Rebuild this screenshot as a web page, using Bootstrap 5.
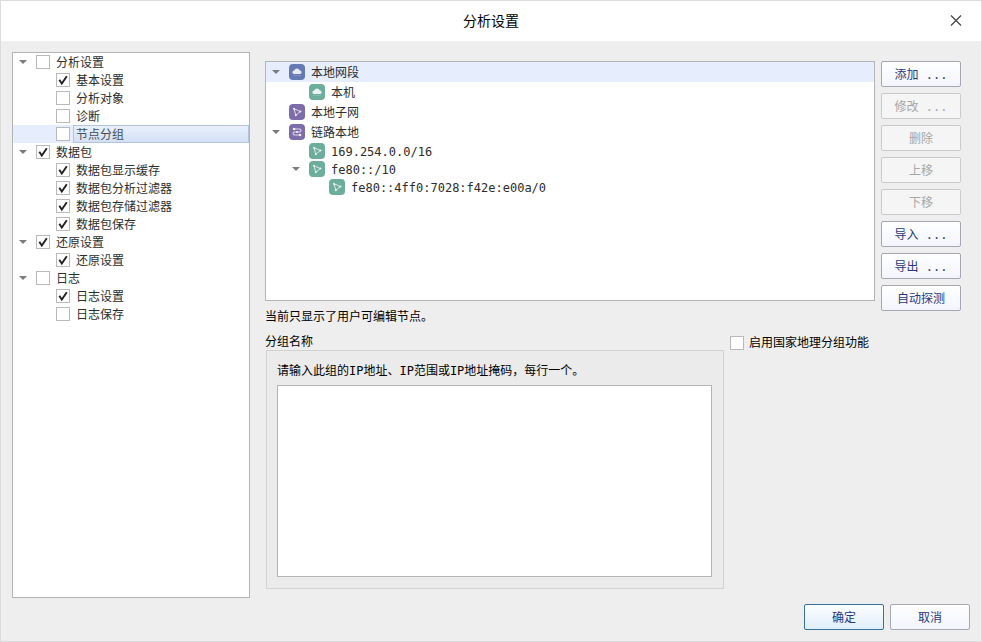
<!DOCTYPE html>
<html lang="zh-CN">
<head>
<meta charset="utf-8">
<meta name="viewport" content="width=device-width, initial-scale=1">
<title>分析设置</title>
<link href="https://cdn.jsdelivr.net/npm/bootstrap@5.3.0/dist/css/bootstrap.min.css" rel="stylesheet">
<style>
body { font: 12px/18px "DejaVu Sans Mono", "Noto Sans CJK SC", monospace; color: #000; background: #eee; }
.dialog { border: 1px solid #dcdcdc; }
.title-bar { height: 40px; background: #fff; }
.title-bar h1 { font-size: 14px; line-height: 20px; }
.close-btn { width: 50px; height: 40px; }
.dialog-main { padding: 11px 20px 0 11px; gap: 15px; }
.dialog-foot { padding: 6px 11px 11px; gap: 6px; }
.pane { background: #fff; border: 1px solid #b4b4b4; }
.settings-tree { width: 238px; flex: none; margin-bottom: 0; }
.tree { color: #2c2c2c; }
.tree ul ul { padding-left: 20px; }
.tree-row { display: flex; align-items: center; height: 18px; }
.tree-row.tall { height: 20px; }
.tree ul ul .tree-row { margin-left: -20px; padding-left: 20px; }
.tree ul ul ul .tree-row { margin-left: -40px; padding-left: 40px; }
.tree-row.selected { background: #e6eefd; }
.toggle { width: 20px; height: 18px; flex: none; margin-right: 3px; padding: 0; border: 0; background: none; display: flex; align-items: center; justify-content: center; }
button.toggle::before { content: ""; border: 4px solid transparent; border-top-color: #7b7b7b; border-bottom: 0; }
.tick { appearance: none; flex: none; width: 14px; height: 14px; margin: 0; border: 1px solid #b9b9b9; background: #fff; }
.tick:checked { background: #fff url("data:image/svg+xml,%3Csvg xmlns='http://www.w3.org/2000/svg' viewBox='0 0 12 12'%3E%3Cpath d='M2.300 5.800 4.800 9.600 9.800 2.200' fill='none' stroke='%23222' stroke-width='1.9'/%3E%3C/svg%3E"); }
.row-text { margin-left: 3px; padding: 2px 0 0 2px; border: 1px solid transparent; line-height: 14px; flex: 1; white-space: nowrap; }
.selected .row-text.boxed { border-color: #b3c3dd; background: linear-gradient(#e9f0fc, #d3e0f4); color: #454d5c; }
.node-icon { width: 16px; height: 16px; flex: none; }
.right-side { padding-top: 9px; min-width: 0; }
.node-list { height: 240px; }
.side-buttons { width: 80px; flex: none; }
.gap-6 { gap: 6px; }
.gap-7 { gap: 7px; }
.dlg-btn { --bs-btn-font-size: 12px; --bs-btn-line-height: 18px; --bs-btn-border-radius: 2px; --bs-btn-color: #26387c; --bs-btn-border-color: #a5a8b0; --bs-btn-disabled-color: #a6a6a6; --bs-btn-disabled-border-color: #cbcbcb; --bs-btn-disabled-opacity: 1; padding: 4px 0 2px; font-family: inherit; width: 80px; background: linear-gradient(#fff, #f2f5fd); white-space: pre; }
.dlg-btn:disabled { background: #f5f5f5; }
.dlg-btn.default { --bs-btn-border-color: #36709c; background: linear-gradient(#fdfeff, #dfeefa); }
.group-area { padding-bottom: 9px; }
.group-name { padding-top: 2px; line-height: 16px; }
.geo-side { width: 231px; flex: none; padding-top: 2px; }
.geo-side label { margin-left: 5px; }
.group-box { border: 1px solid #d2d2d2; background: #ebebeb; padding: 11px 11px 11px 10px; margin-left: 1px; }
.group-box textarea { resize: none; border-radius: 0; outline: 0; margin-top: 5px; }
</style>
<script src="https://cdn.jsdelivr.net/npm/bootstrap@5.3.0/dist/js/bootstrap.bundle.min.js"></script>
</head>
<body>
<svg class="d-none" aria-hidden="true">
  <symbol id="cloud" viewBox="0 0 16 16"><path d="M5 10a1.700 1.700 0 0 1 .2-3.400A2.900 2.900 0 0 1 10.700 6.600 1.700 1.700 0 0 1 11 10Z" fill="#fff" opacity=".85"/><path d="M4 11.500h8" stroke="#fff" stroke-width="1" opacity=".15"/></symbol>
  <symbol id="subnet" viewBox="0 0 16 16"><path d="M5 4.800 11.500 7.500 6.800 11.200Z" fill="none" stroke="#fff" stroke-width="1" opacity=".75"/><g fill="#fff" opacity=".8"><circle cx="5" cy="4.800" r="1"/><circle cx="11.500" cy="7.500" r="1"/><circle cx="6.800" cy="11.200" r="1"/></g></symbol>
  <symbol id="link" viewBox="0 0 16 16"><path d="M4.500 5H10.500Q12 5 12 6.500T10.500 8H5.500Q4 8 4 9.500T5.500 11H11.500" fill="none" stroke="#fff" stroke-width="1.100" opacity=".75"/><g fill="#fff" opacity=".85"><circle cx="5" cy="5" r="1.300"/><circle cx="11" cy="11" r="1.300"/><circle cx="8" cy="8" r="1"/></g></symbol>
</svg>
<div class="dialog min-vh-100 d-flex flex-column">
  <header class="title-bar d-flex align-items-center position-relative justify-content-center">
    <h1 class="m-0 fw-normal">分析设置</h1>
    <button type="button" class="close-btn btn p-0 border-0 position-absolute top-0 end-0 d-flex align-items-center justify-content-center" aria-label="关闭">
      <svg width="12" height="12" viewBox="0 0 12 12"><path d="M1 0.500 11 10.500M11 0.500 1 10.500" stroke="#444" stroke-width="1.200"/></svg>
    </button>
  </header>

  <main class="dialog-main d-flex flex-grow-1">
    <nav class="settings-tree pane tree" aria-label="设置分类">
      <ul class="list-unstyled m-0">
        <li><div class="tree-row"><button type="button" class="toggle" aria-label="折叠"></button><input class="tick" type="checkbox" id="c1"><label class="row-text" for="c1">分析设置</label></div>
          <ul class="list-unstyled">
            <li class="tree-row"><span class="toggle"></span><input class="tick" type="checkbox" id="c2" checked><label class="row-text" for="c2">基本设置</label></li>
            <li class="tree-row"><span class="toggle"></span><input class="tick" type="checkbox" id="c3"><label class="row-text" for="c3">分析对象</label></li>
            <li class="tree-row"><span class="toggle"></span><input class="tick" type="checkbox" id="c4"><label class="row-text" for="c4">诊断</label></li>
            <li class="tree-row selected"><span class="toggle"></span><input class="tick" type="checkbox" id="c5"><label class="row-text boxed" for="c5">节点分组</label></li>
          </ul>
        </li>
        <li><div class="tree-row"><button type="button" class="toggle" aria-label="折叠"></button><input class="tick" type="checkbox" id="c6" checked><label class="row-text" for="c6">数据包</label></div>
          <ul class="list-unstyled">
            <li class="tree-row"><span class="toggle"></span><input class="tick" type="checkbox" id="c7" checked><label class="row-text" for="c7">数据包显示缓存</label></li>
            <li class="tree-row"><span class="toggle"></span><input class="tick" type="checkbox" id="c8" checked><label class="row-text" for="c8">数据包分析过滤器</label></li>
            <li class="tree-row"><span class="toggle"></span><input class="tick" type="checkbox" id="c9" checked><label class="row-text" for="c9">数据包存储过滤器</label></li>
            <li class="tree-row"><span class="toggle"></span><input class="tick" type="checkbox" id="c10" checked><label class="row-text" for="c10">数据包保存</label></li>
          </ul>
        </li>
        <li><div class="tree-row"><button type="button" class="toggle" aria-label="折叠"></button><input class="tick" type="checkbox" id="c11" checked><label class="row-text" for="c11">还原设置</label></div>
          <ul class="list-unstyled">
            <li class="tree-row"><span class="toggle"></span><input class="tick" type="checkbox" id="c12" checked><label class="row-text" for="c12">还原设置</label></li>
          </ul>
        </li>
        <li><div class="tree-row"><button type="button" class="toggle" aria-label="折叠"></button><input class="tick" type="checkbox" id="c13"><label class="row-text" for="c13">日志</label></div>
          <ul class="list-unstyled">
            <li class="tree-row"><span class="toggle"></span><input class="tick" type="checkbox" id="c14" checked><label class="row-text" for="c14">日志设置</label></li>
            <li class="tree-row"><span class="toggle"></span><input class="tick" type="checkbox" id="c15"><label class="row-text" for="c15">日志保存</label></li>
          </ul>
        </li>
      </ul>
    </nav>

    <section class="right-side flex-grow-1 d-flex flex-column gap-6">
      <div class="d-flex gap-6">
        <div class="flex-grow-1 d-flex flex-column gap-7">
          <div class="node-list pane tree">
            <ul class="list-unstyled m-0">
              <li><div class="tree-row tall selected"><button type="button" class="toggle" aria-label="折叠"></button><svg class="node-icon"><rect width="16" height="16" rx="4" fill="#6679b3"/><use href="#cloud"/></svg><span class="row-text">本地网段</span></div>
                <ul class="list-unstyled">
                  <li class="tree-row tall"><span class="toggle"></span><svg class="node-icon"><rect width="16" height="16" rx="4" fill="#6dad9b"/><use href="#cloud"/></svg><span class="row-text">本机</span></li>
                </ul>
              </li>
              <li class="tree-row tall"><span class="toggle"></span><svg class="node-icon"><rect width="16" height="16" rx="4" fill="#7e6baa"/><use href="#subnet"/></svg><span class="row-text">本地子网</span></li>
              <li><div class="tree-row tall"><button type="button" class="toggle" aria-label="折叠"></button><svg class="node-icon"><rect width="16" height="16" rx="4" fill="#7e6baa"/><use href="#link"/></svg><span class="row-text">链路本地</span></div>
                <ul class="list-unstyled">
                  <li class="tree-row"><span class="toggle"></span><svg class="node-icon"><rect width="16" height="16" rx="4" fill="#6dad9b"/><use href="#subnet"/></svg><span class="row-text">169.254.0.0/16</span></li>
                  <li><div class="tree-row"><button type="button" class="toggle" aria-label="折叠"></button><svg class="node-icon"><rect width="16" height="16" rx="4" fill="#6dad9b"/><use href="#subnet"/></svg><span class="row-text">fe80::/10</span></div>
                    <ul class="list-unstyled">
                      <li class="tree-row"><span class="toggle"></span><svg class="node-icon"><rect width="16" height="16" rx="4" fill="#6dad9b"/><use href="#subnet"/></svg><span class="row-text">fe80::4ff0:7028:f42e:e00a/0</span></li>
                    </ul>
                  </li>
                </ul>
              </li>
            </ul>
          </div>
          <p class="m-0">当前只显示了用户可编辑节点。</p>
        </div>
        <div class="side-buttons d-flex flex-column gap-6">
          <button type="button" class="btn dlg-btn">添加 ...</button>
          <button type="button" class="btn dlg-btn" disabled>修改 ...</button>
          <button type="button" class="btn dlg-btn" disabled>删除</button>
          <button type="button" class="btn dlg-btn" disabled>上移</button>
          <button type="button" class="btn dlg-btn" disabled>下移</button>
          <button type="button" class="btn dlg-btn">导入 ...</button>
          <button type="button" class="btn dlg-btn">导出 ...</button>
          <button type="button" class="btn dlg-btn">自动探测</button>
        </div>
      </div>
      <div class="group-area d-flex flex-grow-1 gap-6">
        <div class="flex-grow-1 d-flex flex-column">
          <div class="group-name">分组名称</div>
          <div class="group-box flex-grow-1 d-flex flex-column">
            <label for="ips">请输入此组的IP地址、IP范围或IP地址掩码，每行一个。</label>
            <textarea id="ips" class="pane flex-grow-1"></textarea>
          </div>
        </div>
        <div class="geo-side">
          <div class="d-flex align-items-center">
            <input class="tick" type="checkbox" id="geo"><label for="geo">启用国家地理分组功能</label>
          </div>
        </div>
      </div>
    </section>
  </main>

  <footer class="dialog-foot d-flex justify-content-end">
    <button type="button" class="btn dlg-btn default">确定</button>
    <button type="button" class="btn dlg-btn">取消</button>
  </footer>
</div>
</body>
</html>
